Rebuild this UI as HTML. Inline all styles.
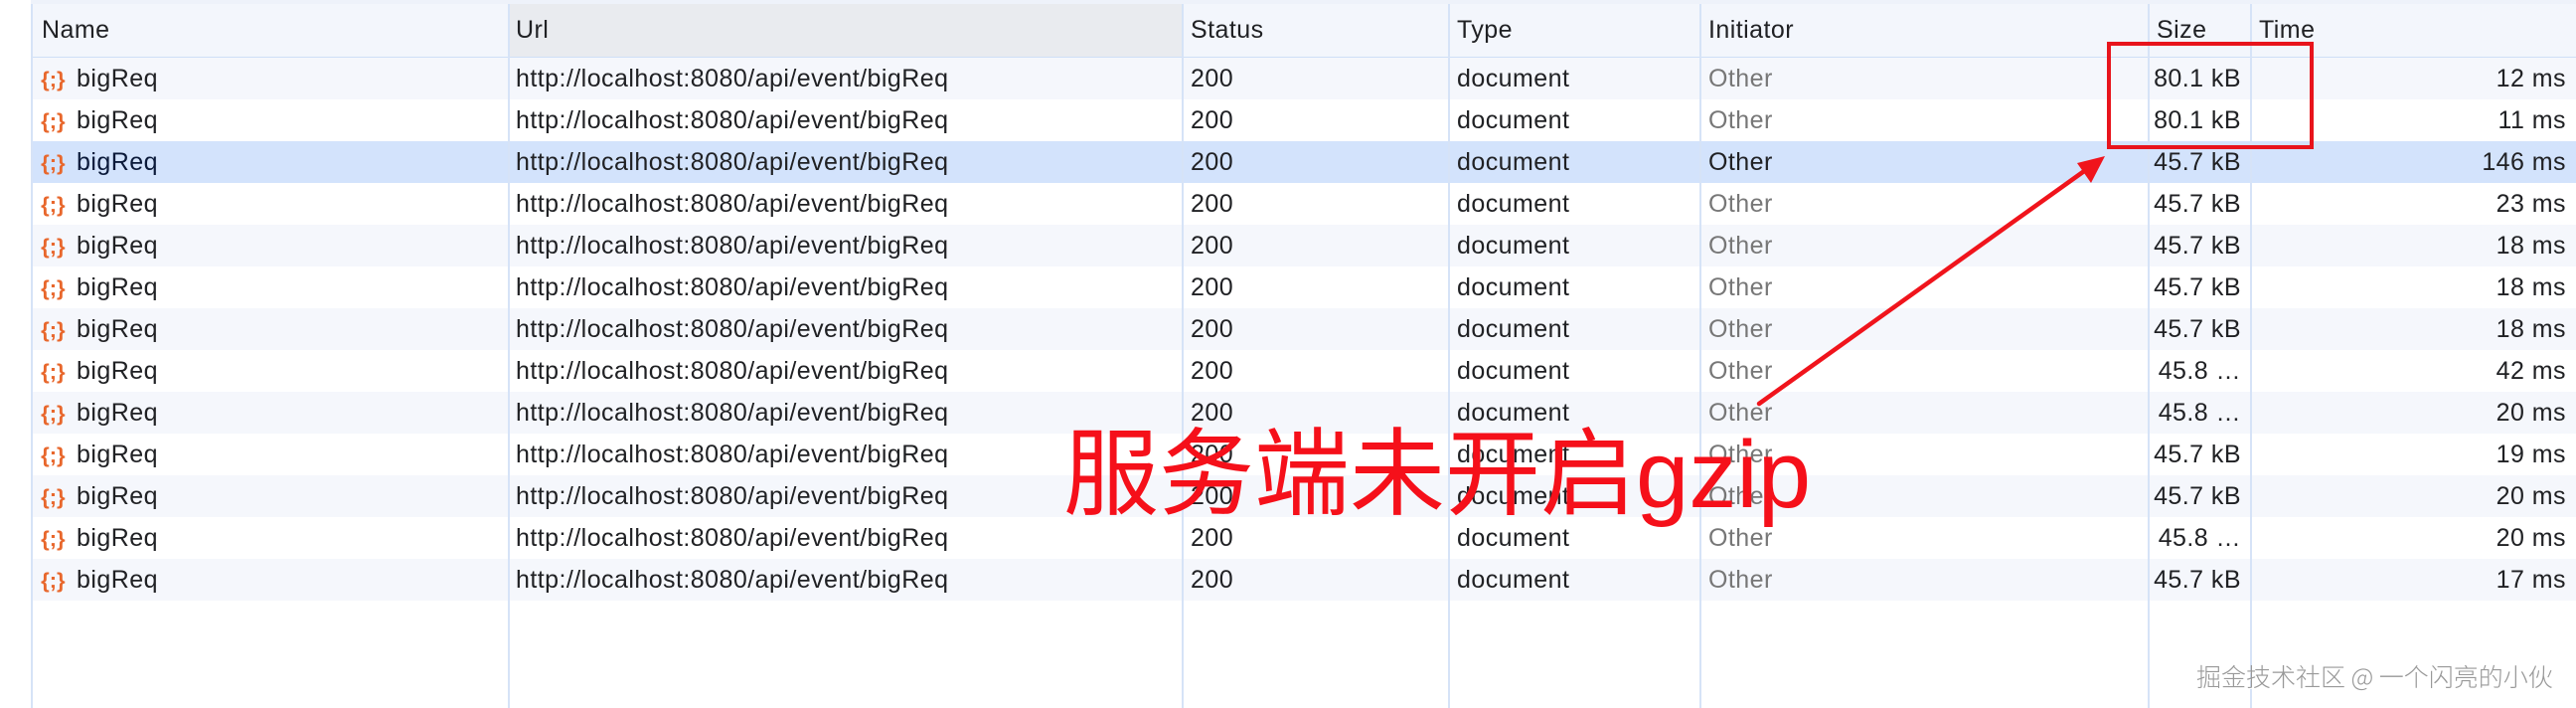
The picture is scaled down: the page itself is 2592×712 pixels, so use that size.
<!DOCTYPE html>
<html><head><meta charset="utf-8"><style>
body{margin:0;width:2592px;height:712px;overflow:hidden;background:#fff;position:relative;font-family:"Liberation Sans","Noto Sans CJK SC",sans-serif;}
.top{position:absolute;left:31px;top:0;width:2561px;height:4px;background:#eef2fa;border-bottom:1px solid #d4e1f7;}
.hdr{position:absolute;left:31px;top:4px;width:2561px;height:53px;background:#f3f6fc;border-bottom:2px solid #cfdff7;}
.urlh{position:absolute;left:512px;top:4px;width:678px;height:53px;background:#e9ebef;}
.row{position:absolute;left:31px;width:2561px;height:42px;}
.s{background:#f5f7fc}.sel{background:#d3e3fc}
.vl{position:absolute;top:4px;bottom:0;width:2px;background:#d6e3f7}
.t{position:absolute;font-size:25px;letter-spacing:0.45px;color:#202124;white-space:nowrap;line-height:42px}
.h{position:absolute;font-size:25px;letter-spacing:0.45px;color:#202124;top:4px;line-height:53px}
.g{color:#777}
.ic{display:inline-block;width:35px;color:#e8672c;font-size:21px;font-weight:bold;letter-spacing:0px;transform:scaleX(1.05)}
.r{text-align:right}
</style></head><body>
<div class="top"></div>
<div class="hdr"></div><div class="urlh"></div>
<div id="rows"></div>
<div class="vl" style="left:31px"></div>
<div class="vl" style="left:511px"></div>
<div class="vl" style="left:1189px"></div>
<div class="vl" style="left:1457px"></div>
<div class="vl" style="left:1710px"></div>
<div class="vl" style="left:2161px"></div>
<div class="vl" style="left:2264px"></div>
<div class="h" style="left:42px">Name</div>
<div class="h" style="left:519px">Url</div>
<div class="h" style="left:1198px">Status</div>
<div class="h" style="left:1466px">Type</div>
<div class="h" style="left:1719px">Initiator</div>
<div class="h" style="left:2170px">Size</div>
<div class="h" style="left:2273px">Time</div>
<script>
var sz=["80.1 kB","80.1 kB","45.7 kB","45.7 kB","45.7 kB","45.7 kB","45.7 kB","45.8 …","45.8 …","45.7 kB","45.7 kB","45.8 …","45.7 kB"];
var tm=["12 ms","11 ms","146 ms","23 ms","18 ms","18 ms","18 ms","42 ms","20 ms","19 ms","20 ms","20 ms","17 ms"];
var h="";
for(var i=0;i<13;i++){var y=58+42*i;var c=i==2?"sel":(i%2==0?"s":"");
h+='<div class="row '+c+'" style="top:'+y+'px"></div>';
var sc=i==2?' style="color:#0b1a3a"':'';
h+='<div class="t" style="left:42px;top:'+y+'px"><span class="ic">{;}</span><span'+sc+'>bigReq</span></div>';
h+='<div class="t" style="left:519px;top:'+y+'px"'+sc+'>http://localhost:8080/api/event/bigReq</div>';
h+='<div class="t" style="left:1198px;top:'+y+'px"'+sc+'>200</div>';
h+='<div class="t" style="left:1466px;top:'+y+'px"'+sc+'>document</div>';
h+='<div class="t '+(i==2?'':'g')+'" style="left:1719px;top:'+y+'px"'+sc+'>Other</div>';
h+='<div class="t r" style="left:2150px;width:105px;top:'+y+'px"'+sc+'>'+sz[i]+'</div>';
h+='<div class="t r" style="left:2265px;width:317px;top:'+y+'px"'+sc+'>'+tm[i]+'</div>';}
document.getElementById("rows").innerHTML=h;
</script>
<svg style="position:absolute;left:0;top:0" width="2592" height="712">
<rect x="2122" y="44" width="204" height="104" fill="none" stroke="#e8141c" stroke-width="4"/>
<line x1="1770" y1="406" x2="2100" y2="170" stroke="#f0141c" stroke-width="4.5" stroke-linecap="round"/>
<polygon points="2118,157 2090,164 2104,184" fill="#f0141c"/>
</svg>
<div style="position:absolute;left:1070px;top:418px;font-size:96px;line-height:120px;color:#f5101a;white-space:nowrap;font-family:'Liberation Sans','Noto Sans CJK SC',sans-serif">服务端未开启gzip</div>
<div style="position:absolute;left:2210px;top:662px;font-size:25px;color:#999;text-shadow:1px 1px 0 #fff;white-space:nowrap;font-family:'Noto Sans CJK SC',sans-serif;font-weight:300">掘金技术社区 @ 一个闪亮的小伙</div>
</body></html>
